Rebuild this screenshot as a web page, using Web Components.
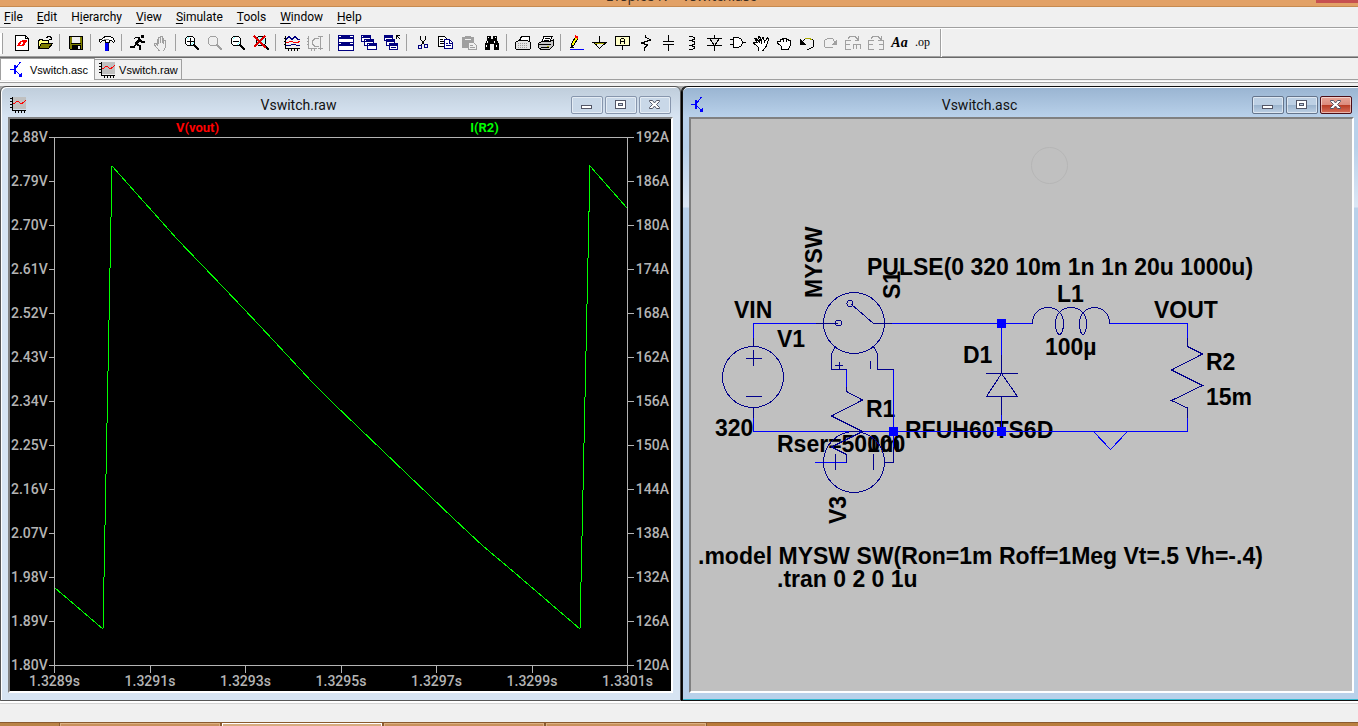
<!DOCTYPE html>
<html lang="en">
<head>
<meta charset="utf-8">
<title>LTspice IV - Vswitch.asc</title>
<style>
  html, body {
    height: 100%;
    margin: 0;
  }
  body {
    font-family: Roboto, "Liberation Sans", sans-serif;
    overflow: hidden;
  }
</style>
</head>
<body>
<lt-app></lt-app>

<script>
const ICONS = {
  'new': `<path d="M1.500.500h10l3 3v12h-13z" fill="#fff" stroke="#000"/><path d="M11.500.500v3h3" fill="none" stroke="#000"/><path d="M3 11l3-5h2l-2 4h2l3-5h2l-3 6zM8 5h5v2H7z" fill="red"/>`,
  'open': `<path d="M1 14V5h1V4h3v1h6v3" fill="#ffff80" stroke="#000"/><path d="M1.500 13.500l3-5h11l-4 5z" fill="#808000" stroke="#000"/><path d="M9 2.500h1v-1h3v1h1v2M12 4.500h3" fill="none" stroke="#000"/>`,
  'save': `<path d="M1.500 1.500h13v13h-12l-1-1z" fill="#808000" stroke="#000"/><path d="M4 2h8v6H4z" fill="#efefef"/><path d="M4 10h9v4H4z" fill="#000"/><path d="M10 11h2v3h-2z" fill="#efefef"/><path d="M3 8.500h10" stroke="#000"/>`,
  'hammer': `<path d="M6 7h4v9H6z" fill="#00f"/><path d="M9.500 7v9" stroke="#000080"/><path d="M.500 4.500h2l2-2 2-1h5l3 2 1 3-1 1-2-2h-2v2h-4v-2h-3l-2 2-1-1z" fill="#fff" stroke="#000"/><path d="M5 4.500h5" stroke="#909090"/>`,
  'run': `<path d="M11 0h3v3h-3z" fill="#000"/><path d="M4 3.500l2-1h3l1 1" fill="none" stroke="#000"/><path d="M10 4L6 9" stroke="#000" stroke-width="3"/><path d="M6 9.500l4 1v4M6 9l-2 3H0M10 5l2 2h3" fill="none" stroke="#000" stroke-width="1.500"/>`,
  'halt': `<path d="M4.500 10V4h1v5V2h2v6V1h2v7V3h1v6V5h2v7l-2 4h-4l-5-6v-2h1z" fill="#efefef" stroke="#a0a0a0"/>`,
  'zoomin': `<circle cx="6" cy="6" r="5" fill="#fff" stroke="#000"/><path d="M3 4l2-2M7 10l3-3" stroke="#7ff"/><path d="M3 6.500h7M6.500 3v7" stroke="#000"/><path d="M10 10l5 5" stroke="#000" stroke-width="2"/>`,
  'pan': `<circle cx="6" cy="6" r="5" fill="#efefef" stroke="#a0a0a0"/><path d="M10 10l5 5" stroke="#a0a0a0" stroke-width="2"/>`,
  'zoomout': `<circle cx="6" cy="6" r="5" fill="#fff" stroke="#000"/><path d="M3 4l2-2M7 10l3-3" stroke="#7ff"/><path d="M3 6.500h6" stroke="#000"/><path d="M10 10l5 5" stroke="#000" stroke-width="2"/>`,
  'zoomfit': `<circle cx="8" cy="6" r="5" fill="#bff" stroke="#000"/><path d="M11 10l5 5" stroke="#000" stroke-width="2"/><path d="M1 1l12 12M12 1L1 12" stroke="#e00000" stroke-width="1.500"/>`,
  'plot': `<path d="M1.500 1v13M1 13.500h15M0 3.500h2M0 6.500h2M0 9.500h2M4.500 13v3M7.500 13v3M10.500 13v3M13.500 13v3" stroke="#000"/><path d="M2 4.500l3-3 3 3 3-3 3 3h2" fill="none" stroke="#000080"/><path d="M2 7.500h2l2-1h2l2 1h3l3-1" fill="none" stroke="red"/><path d="M2 10.500h4l2-1h3l2 1h3" fill="none" stroke="#000080"/>`,
  'autorange': `<path d="M1.500 1v13M1 13.500h9M0 3.500h2M0 6.500h2M0 9.500h2M4.500 13v3M7.500 13v3M13.500 1v14M11 1.500h5M11 13.500h5" fill="none" stroke="#a0a0a0"/><path d="M12 3.500H8l-3 3v2l3 3h4" fill="none" stroke="#a0a0a0"/>`,
  'tile': `<path d="M.500.500h15v15H.500z" fill="#fff" stroke="#000080"/><path d="M0 0h16v4H0zM0 7h16v4H0z" fill="#000080"/><path d="M1 1.500h2M12 1.500h3M1 8.500h2M12 8.500h3" stroke="#fff"/>`,
  'cascade': `<g fill="#fff" stroke="#000080"><path d="M.500.500h9v6h-9zM3.500 4.500h9v6h-9zM6.500 8.500h9v6h-9z"/></g><path d="M0 0h10v3H0zM3 4h10v3H3zM6 8h10v3H6z" fill="#000080"/><path d="M1 1.500h1M4 5.500h1M7 9.500h1" stroke="#fff"/>`,
  'closeall': `<g fill="#fff" stroke="#000080"><path d="M.500.500h8v5h-8zM2.500 4.500h8v6h-8zM5.500 8.500h8v6h-8z"/></g><path d="M0 0h9v3H0zM2 4h9v3H2zM5 8h9v3H5z" fill="#000080"/><path d="M7 12.500h5" stroke="#000080"/><path d="M12.500 4V.500H16M12 0l4 4" fill="none" stroke="#000"/>`,
  'cut': `<path d="M5.500 1v3l4 6M10.500 1v3l-4 6" fill="none" stroke="#000"/><circle cx="5" cy="12" r="2" fill="none" stroke="#000080"/><circle cx="11" cy="11" r="2" fill="none" stroke="#000080"/>`,
  'copy': `<path d="M.500 1.500h6l3 3v7h-9z" fill="#fff" stroke="#000"/><path d="M2 4.500h3M2 6.500h5M2 8.500h5" stroke="#000"/><path d="M6.500 4.500h5l3 3v6h-8z" fill="#fff" stroke="#000080"/><path d="M11.500 5v3h3M8 8.500h2M8 10.500h5" fill="none" stroke="#000080"/>`,
  'paste': `<path d="M1 2h3V1h6v1h3v5H7v6H1z" fill="#a0a0a0"/><path d="M4 4h6" stroke="#efefef"/><path d="M7.500 7.500h5l3 3v4h-8z" fill="#efefef" stroke="#a0a0a0"/><path d="M9 10.500h3M9 12.500h5" stroke="#a0a0a0"/>`,
  'find': `<path d="M3 1h4v3h2V1h4v4l2 4v6h-5V9H6v6H1V9l2-4z" fill="#000"/><path d="M4.500 2v1M11.500 2v1M3.500 6v2M10.500 6v2M2.500 10v2M12.500 10v2" stroke="#fff"/>`,
  'preview': `<path d="M4.500 5.500l2-4h8v5" fill="#fff" stroke="#000"/><path d="M.500 7.500l3-2h9l3 2v6l-1 1H2l-1.500-1z" fill="#e4e4e4" stroke="#000"/><path d="M3 8.500h10M3 10.500h10M3 12.500h10" stroke="#a0a0a0" stroke-dasharray="1"/>`,
  'print': `<path d="M4 6.500l2-5h8l-2 5" fill="#fff" stroke="#000"/><path d="M7 3.500h5M6 5.500h5" stroke="#000"/><path d="M.500 8.500l3-2h9l3-2v6l-4 4H3l-2.500-2z" fill="#c8c8c8" stroke="#000"/><path d="M1 9.500h12M3 12.500h8" stroke="#000"/><path d="M9 11.500h2" stroke="#aa0"/>`,
  'wire': `<path d="M1 14.500h14" stroke="#00f"/><path d="M2 12l1-4 4-7 2 2-4 7z" fill="#ff0" stroke="#000"/><path d="M6 1l3 2" stroke="red" stroke-width="2"/><path d="M2 9v4h3z" fill="#000"/>`,
  'ground': `<path d="M7.500 1v6" stroke="#000"/><path d="M2 7.500h12l-6.500 6z" fill="#efefef" stroke="#000"/><path d="M0 7.500h15" stroke="#000"/><path d="M3 8.500h9" stroke="#aa0"/>`,
  'label': `<rect x=".500" y="1.500" width="14" height="9" rx="1" fill="#ffffc8" stroke="#000"/><path d="M7.500 11v4" stroke="#000"/><path d="M5.500 9V5l1-2h2l1 2v4M5 6.500h5" fill="none" stroke="#000"/>`,
  'resistor': `<path d="M7.500 0v2l5 3-9 3 6 2-3 3v3" fill="none" stroke="#000"/>`,
  'capacitor': `<path d="M7.500 0v6M7.500 10v6" stroke="#000"/><path d="M2 6.500h11M2 9.500h11" stroke="#000"/>`,
  'inductor': `<path d="M5 1.500h3l2 1v2l-3 1 3 1v3l-3 1 3 1v2l-2 1H5" fill="none" stroke="#000"/>`,
  'diode': `<path d="M7.500 0v16M0 10.500h15M0 3.500h15" stroke="#000"/><path d="M2.500 3.500h10l-5 7z" fill="#e4e4e4" stroke="#000"/>`,
  'gate': `<path d="M0 4.500h4M0 9.500h4M13 7.500h3" stroke="#000"/><path d="M3.500 2.500h5l3 2 1 3-1 3-3 2h-5z" fill="#fff" stroke="#000"/>`,
  'move': `<path d="M5 12L.500 8V7h3l1 1-3-5h1l4 4-1-6h1l2 6 1-5h1l1 5 3-4 1 1-2 7-4 5H6z" fill="#fff" stroke="#000"/>`,
  'drag': `<path d="M5 14v-3L1.500 8V6h3V4h2l1-1h2l1 1h2v1h2v5l-2 4z" fill="#fff" stroke="#000"/><path d="M7.500 4v3M10.500 4v3" stroke="#000"/>`,
  'undo': `<path d="M3 7l3-3 4-1 4 2 1 3-1 4-4 2H8" fill="none" stroke="#000"/><path d="M6 3.500h4l3 1" fill="none" stroke="#aa0"/><path d="M1 4v6h6z" fill="#000"/>`,
  'redo': `<path d="M13 8l-2-4-4-1-4 2-1 3 1 4 4 1 4-1" fill="none" stroke="#a0a0a0"/><path d="M15 4v6H9z" fill="#a0a0a0"/>`,
  'rotate': `<path d="M5.500 5.500h-5v9h5M1 9.500h4M8.500 14V9.500h7V14M11.500 10v4M3 3.500l2-2h5l3 3M13.500 1v4h-4" fill="none" stroke="#a0a0a0"/>`,
  'mirror': `<path d="M5.500 5.500h-5v9h5M1 9.500h4M10.500 5.500h5v9h-5M11 9.500h4M3 3.500l2-2h5l3 3M13.500 1v4h-4" fill="none" stroke="#a0a0a0"/>`,
  'schematic': `<path d="M0 7.500h4" stroke="#00f"/><path d="M4 3h2v9H4zM9 15h3v-4l-2 1z" fill="#00f"/><path d="M6 6l4.500-6M6 9l4 4" stroke="#00f"/>`,
  'waveform': `<path d="M3 0h13v12H3z" fill="#c0c0c0"/><path d="M2.500 0v14M2 13.500h14M0 1.500h2M0 4.500h2M0 7.500h2M0 10.500h2M5.500 13v3M8.500 13v3M11.500 13v3M14.500 13v3" stroke="#000"/><path d="M3 7h2V6h1V5h3v1h1v1h3V6h1V5h1V4h1V3h-1v1h-1v1h-2v1h-2V5h-1V4H6v1H5v1H3z" fill="red"/>`
};

class LtIcon extends HTMLElement {
  connectedCallback() {
    const shadow = this.shadowRoot || this.attachShadow({ mode: 'open' });
    shadow.innerHTML = `
      <style>
        :host { display: block; width: 16px; height: 16px; flex: none; }
        svg { display: block; }
      </style>
      <svg width="16" height="16" viewBox="0 0 16 16" shape-rendering="crispEdges" aria-hidden="true">${ICONS[this.getAttribute('name')] || ''}</svg>
    `;
  }
}
customElements.define('lt-icon', LtIcon);

class TitleBar extends HTMLElement {
  constructor() {
    super();
    this.attachShadow({ mode: 'open' }).innerHTML = `
      <style>
        :host {
          display: flex;
          justify-content: flex-end;
          height: 6px;
          overflow: hidden;
          background: #e2a166;
          border-bottom: 1px solid #c68a50;
        }
        h1 {
          flex: 1;
          margin: -14px 0 0 46px;
          font: 14px/20px "Open Sans", sans-serif;
          color: #3a2c20;
          text-align: center;
        }
        button {
          width: 42px;
          height: 3px;
          padding: 0;
          border: 0;
          background: #c75050;
        }
      </style>
      <h1><slot></slot></h1>
      <button type="button" aria-label="Close"></button>
    `;
  }
}
customElements.define('title-bar', TitleBar);

class MenuBar extends HTMLElement {
  constructor() {
    super();
    const items = ['File', 'Edit', 'H|ierarchy', 'View', 'Simulate', 'Tools', 'Window', 'Help'];
    // "|" puts the access key after the first letter
    const label = t => t.includes('|')
      ? t.replace(/^(.)\|(.)/, '$1<u>$2</u>')
      : `<u>${t[0]}</u>${t.slice(1)}`;
    this.attachShadow({ mode: 'open' }).innerHTML = `
      <style>
        :host { display: block; background: #f0f0f0; border-bottom: 1px solid #a0a0a0; }
        nav { display: flex; gap: 14px; height: 20px; padding-left: 4px; }
        button {
          padding: 0;
          border: 0;
          background: none;
          font: 12px/20px Roboto, sans-serif;
          color: #000;
        }
        u { text-underline-offset: 2px; }
      </style>
      <nav>${items.map(t => `<button type="button">${label(t)}</button>`).join('')}</nav>
    `;
  }
}
customElements.define('menu-bar', MenuBar);

class ToolBar extends HTMLElement {
  constructor() {
    super();
    const groups = [
      ['new', 'open'], ['save'], ['hammer'], ['run', 'halt'],
      ['zoomin', 'pan', 'zoomout', 'zoomfit'], ['plot', 'autorange'],
      ['tile', 'cascade', 'closeall'], ['cut', 'copy', 'paste', 'find'],
      ['preview', 'print'],
      ['wire', 'ground', 'label', 'resistor', 'capacitor', 'inductor', 'diode', 'gate',
        'move', 'drag', 'undo', 'redo', 'rotate', 'mirror']
    ];
    const html = groups.map(g => `<div class="group">${g.map(n =>
      `<button type="button" aria-label="${n}"><lt-icon name="${n}"></lt-icon></button>`).join('')}</div>`);
    this.attachShadow({ mode: 'open' }).innerHTML = `
      <style>
        :host {
          display: flex;
          height: 28px;
          background: #f0f0f0;
          border-top: 1px solid #fff;
          border-bottom: 1px solid #696969;
          box-shadow: inset 0 -1px #a0a0a0;
        }
        .grip { width: 2px; margin: 4px 8px 3px 0; background: #fff; border-right: 1px solid #a0a0a0; }
        .group { display: flex; }
        .group + .group::before {
          content: "";
          width: 1px;
          height: 17px;
          margin: 5px 5px 0 2px;
          background: #a0a0a0;
        }
        button {
          width: 23px;
          height: 27px;
          padding: 0 4px 0 3px;
          border: 0;
          background: none;
          color: #000;
        }
        .text { padding: 0; line-height: 27px; font-family: "Liberation Serif", serif; }
        .anno { font-size: 14px; font-weight: bold; font-style: italic; }
        .op { font-size: 12px; }
        .end { width: 1px; margin-left: 6px; background: #a0a0a0; border-right: 1px solid #fff; }
      </style>
      <div class="grip"></div>
      ${html.join('')}
      <button type="button" class="text anno">Aa</button>
      <button type="button" class="text op">.op</button>
      <div class="end"></div>
    `;
  }
}
customElements.define('tool-bar', ToolBar);

class DocTabs extends HTMLElement {
  constructor() {
    super();
    this.attachShadow({ mode: 'open' }).innerHTML = `
      <style>
        :host {
          display: block;
          background: #f0f0f0;
          border-bottom: 1px solid #a0a0a0;
          box-shadow: inset 0 -1px #fff;
        }
        .row { display: flex; align-items: flex-end; height: 21px; margin-bottom: 2px; border-bottom: 1px solid #a0a0a0; }
        button {
          display: flex;
          align-items: center;
          gap: 4px;
          box-sizing: border-box;
          height: 20px;
          padding: 0 3px 0 4px;
          border: 1px solid #a0a0a0;
          border-width: 1px 1px 0 0;
          background: #f0f0f0;
          font: 11px/18px "Liberation Sans", sans-serif;
          color: #000;
        }
        button[aria-selected="true"] {
          height: 22px;
          margin-bottom: -1px;
          padding: 0 6px 0 9px;
          border-left-width: 1px;
          background: #fff;
        }
      </style>
      <div class="row" role="tablist">
        <button type="button" role="tab" aria-selected="true"><lt-icon name="schematic"></lt-icon>Vswitch.asc</button>
        <button type="button" role="tab" aria-selected="false"><lt-icon name="waveform"></lt-icon>Vswitch.raw</button>
      </div>
    `;
  }
}
customElements.define('doc-tabs', DocTabs);

class MdiWindow extends HTMLElement {
  constructor() {
    super();
    this.attachShadow({ mode: 'open' }).innerHTML = `
      <style>
        :host {
          --frame: #d7e4f2;
          --title-from: #bfcddb;
          --edge: #555;
          --btn: #c9d8e8;
          --btn-low: #c9d8e8;
          --btn-edge: #8796ad;
          display: flex;
          flex-direction: column;
          box-sizing: border-box;
          min-width: 0;
          padding: 1px 7px 7px;
          border: 1px solid var(--edge);
          border-radius: 6px 6px 0 0;
          background: linear-gradient(var(--title-from), var(--frame) 30px, var(--frame));
          box-shadow: inset 1px 1px #fff;
        }
        :host([active]) {
          --frame: #b9d1ea;
          --title-from: #99b4d1;
          --edge: #111;
          --btn: #bdd0e4;
          --btn-low: #9ab3cd;
          --btn-edge: #65758c;
          padding: 1px 4px 7px 6px;
          border-right: 0;
          border-radius: 6px 0 0 0;
          background: linear-gradient(var(--title-from), var(--frame) 30px, var(--frame) 60px, #dbe7f5 120px, var(--frame) 121px);
          box-shadow: inset 0 1px #fff, inset 0 -1px #35b8d0, -1px 0 #000;
        }
        header { display: flex; align-items: center; height: 26px; padding: 0 2px 3px; }
        lt-icon { margin-top: 8px; }
        h2 { flex: 1; margin: 8px 0 0; font: 14px/20px Roboto, sans-serif; color: #111; text-align: center; }
        .buttons { display: flex; gap: 2px; margin-top: 7px; }
        button {
          display: grid;
          place-items: center;
          width: 32px;
          height: 18px;
          padding: 0;
          border: 1px solid var(--btn-edge);
          border-radius: 2px;
          background: linear-gradient(var(--btn) 50%, var(--btn-low) 50%, var(--btn));
          box-shadow: inset 0 0 0 1px rgba(255, 255, 255, .5);
        }
        :host([active]) .close { border-color: #4c0d16; background: linear-gradient(#e8a598, #dc8a7c 50%, #b83a22 50%, #d4705c); }
        svg { display: block; }
        .client {
          flex: 1;
          min-height: 0;
          border: 2px solid;
          border-color: #808080 #fff #fff #808080;
          overflow: hidden;
        }
      </style>
      <header>
        <lt-icon></lt-icon>
        <h2></h2>
        <div class="buttons">
          <button type="button" aria-label="Minimize"><svg width="12" height="12" shape-rendering="crispEdges"><path d="M.500 6.500h10v3h-10z" fill="#fff" stroke="#535666"/></svg></button>
          <button type="button" aria-label="Maximize"><svg width="12" height="12" shape-rendering="crispEdges"><path d="M.500 1.500h10v8h-10zM3.500 4.500h4v2h-4z" fill="#fff" fill-rule="evenodd" stroke="#535666"/></svg></button>
          <button type="button" class="close" aria-label="Close"><svg width="12" height="12"><path d="M.500 1.500h3L5.500 4l2-2.500h3v1L7.500 5.500l3 3v1h-3l-2-2.500-2 2.500h-3v-1l3-3-3-3z" fill="#fff" stroke="#535666"/></svg></button>
        </div>
      </header>
      <div class="client"><slot></slot></div>
    `;
  }

  connectedCallback() {
    const shadow = this.shadowRoot;
    shadow.querySelector('h2').textContent = this.getAttribute('heading');
    const icon = shadow.querySelector('lt-icon');
    icon.setAttribute('name', this.getAttribute('icon'));
    icon.connectedCallback();
  }
}
customElements.define('mdi-window', MdiWindow);

class WavePlot extends HTMLElement {
  constructor() {
    super();
    const volts = ['2.88V', '2.79V', '2.70V', '2.61V', '2.52V', '2.43V', '2.34V', '2.25V', '2.16V', '2.07V', '1.98V', '1.89V', '1.80V'];
    const amps = ['192A', '186A', '180A', '174A', '168A', '162A', '156A', '150A', '144A', '138A', '132A', '126A', '120A'];
    const times = ['1.3289s', '1.3291s', '1.3293s', '1.3295s', '1.3297s', '1.3299s', '1.3301s'];
    const list = a => a.map(t => `<li>${t}</li>`).join('');
    this.attachShadow({ mode: 'open' }).innerHTML = `
      <style>
        :host {
          display: grid;
          grid-template: 18px 1fr 25px / 44px 1fr 43px;
          height: 100%;
          background: #000;
          color: #b4b4b4;
          font: 500 14px/16px Roboto, sans-serif;
        }
        .legend { grid-column: 2; display: flex; font-size: 13px; font-weight: bold; line-height: 18px; }
        .legend span { flex: 1; text-align: center; }
        .v { color: #f00; }
        .i { color: #0f0; }
        ul { display: flex; justify-content: space-between; margin: 0; padding: 0; list-style: none; }
        .y { flex-direction: column; }
        .y li { display: flex; align-items: center; height: 1px; line-height: 1px; }
        .y li::before, .y li::after { content: ""; height: 1px; }
        .left { grid-area: 2 / 1; }
        .left li { justify-content: flex-end; gap: 1px; }
        .left li::after { width: 8px; background: currentColor; }
        .right { grid-area: 2 / 3; }
        .right li { gap: 2px; }
        .right li::before { width: 8px; background: currentColor; }
        .x { grid-area: 3 / 2; }
        .x li { display: flex; flex-direction: column; align-items: center; width: 1px; }
        .x li::before { content: ""; flex: none; width: 1px; height: 7px; background: currentColor; }
        .area { grid-area: 2 / 2; box-sizing: border-box; min-height: 0; border: 1px solid; }
        svg { display: block; width: 100%; height: 100%; }
      </style>
      <div class="legend"><span class="v">V(vout)</span><span class="i">I(R2)</span></div>
      <ul class="y left">${list(volts)}</ul>
      <div class="area">
        <svg viewBox="0 0 572 527" preserveAspectRatio="none" shape-rendering="crispEdges">
          <polyline fill="none" stroke="#0f0" vector-effect="non-scaling-stroke"
            points="0,450 48,491 57,28 122,101 170,151 205,188 258,245 278,265 328,313 375,358 399,381 428,408 460,435 525,491 535,28 572,70"/>
        </svg>
      </div>
      <ul class="y right">${list(amps)}</ul>
      <ul class="x">${list(times)}</ul>
    `;
  }
}
customElements.define('wave-plot', WavePlot);

class SchematicSheet extends HTMLElement {
  constructor() {
    super();
    this.attachShadow({ mode: 'open' }).innerHTML = `
      <style>
        :host { display: block; height: 100%; background: #c0c0c0; }
        svg { display: block; width: 100%; height: 100%; }
        text { font: bold 23px "Liberation Sans", sans-serif; fill: #000; }
        .wire, .part { fill: none; shape-rendering: crispEdges; }
        .wire { stroke: #00f; }
        .part { stroke: #00008b; }
      </style>
      <svg viewBox="0 0 661 572" role="img" aria-label="Switch mode converter schematic">
        <circle cx="358.500" cy="46.500" r="18" fill="none" stroke="#b6b6b6"/>

        <g>
          <text x="43" y="199">VIN</text>
          <text x="86" y="228">V1</text>
          <text x="24" y="317">320</text>
          <text x="86" y="333">Rser=500m</text>
          <text x="176" y="333">100</text>
          <text x="175" y="298">R1</text>
          <text x="176" y="156">PULSE(0 320 10m 1n 1n 20u 1000u)</text>
          <text x="366" y="183">L1</text>
          <text x="354" y="236">100µ</text>
          <text x="463" y="199">VOUT</text>
          <text x="272" y="244">D1</text>
          <text x="214" y="319">RFUH60TS6D</text>
          <text x="515" y="251">R2</text>
          <text x="515" y="286">15m</text>
          <text transform="translate(131 179) rotate(-90)">MYSW</text>
          <text transform="translate(209 180) rotate(-90)">S1</text>
          <text transform="translate(155 405) rotate(-90)">V3</text>
          <text x="7" y="445">.model MYSW SW(Ron=1m Roff=1Meg Vt=.5 Vh=-.4)</text>
          <text x="86" y="468">.tran 0 2 0 1u</text>
        </g>

        <path class="wire" d="M125 204.500H62.500V219M62.500 299V312.500H496.500V299M201 204.500H341.500M418.500 204.500H496.500V219M155.500 250.500V268M202.500 250.500V343.500M124 343.500H155.500M310.500 204V236M310.500 296V312M402.500 312.500L419.500 330.500 436.500 312.500"/>

        <!-- V1 -->
        <circle class="part" cx="62" cy="258" r="30.500"/>
        <path class="part" d="M62.500 219V227M62.500 288V299M55 239.500H71M62.500 231V247M55 277.500H71"/>
        <!-- S1 -->
        <circle class="part" cx="163" cy="204" r="30.500"/>
        <circle class="part" cx="147.500" cy="204" r="3"/>
        <circle class="part" cx="159" cy="184.500" r="3"/>
        <path class="part" d="M125 204.500H147M160 185L182.500 204.500H201M144.500 227.500L140.500 235V250.500H155.500M182.500 227.500L186.500 235V250.500H202.500M144 246.500H152M148.500 243V251M179.500 242V250"/>
        <!-- R1 -->
        <path class="part" d="M155.500 268V272.500L171.500 281 140.500 297 171.500 312.500 140.500 328 155.500 335.500V343.500"/>
        <!-- V3 -->
        <circle class="part" cx="163" cy="343" r="30.500"/>
        <path class="part" d="M144.500 335V351M182.500 335V351M194 343.500H202.500V328"/>
        <!-- D1 -->
        <path class="part" d="M310.500 236V254M310.500 277V296M295 254.500H327M310.500 254.500L295.500 277.500H326.500z"/>
        <!-- L1 -->
        <path class="part" d="M341.500 204.500C341.500 195 348 188.500 357 188.500S372.500 195 372.500 204.500C372.500 210 371 215.500 368.500 215.500S364.500 210 364.500 204.500C364.500 195 371 188.500 380 188.500S395.500 195 395.500 204.500C395.500 210 394 215.500 392 215.500S388.500 210 388.500 204.500C388.500 195 395 188.500 403.500 188.500S418.500 195 418.500 204.500"/>
        <!-- R2 -->
        <path class="part" d="M496.500 219V227.500L511.500 235 480.500 251 511.500 266.500 480.500 281.500 496.500 289V299"/>

        <path fill="#00f" d="M306 200h9v9h-9zM198 308h9v9h-9zM306 308h9v9h-9z"/>
      </svg>
    `;
  }
}
customElements.define('schematic-sheet', SchematicSheet);

class TaskBar extends HTMLElement {
  constructor() {
    super();
    this.attachShadow({ mode: 'open' }).innerHTML = `
      <style>
        :host {
          display: flex;
          gap: 2px;
          height: 3px;
          padding-left: 60px;
          overflow: hidden;
          border-top: 1px solid #8a5a30;
          background: linear-gradient(90deg, #b98347, #b87838 50%, #b98040);
        }
        button {
          box-sizing: border-box;
          width: 160px;
          height: 20px;
          padding: 0;
          border: 1px solid #dcb282;
          outline: 1px solid #8a5a30;
          background: #c8905c;
        }
        .current { border-color: #fff; background: #d8ab80; }
      </style>
      <button type="button" aria-label="Task 1"></button>
      <button type="button" aria-label="LTspice IV" class="current"></button>
      <button type="button" aria-label="Task 3"></button>
      <button type="button" aria-label="Task 4"></button>
    `;
  }
}
customElements.define('task-bar', TaskBar);

class LtApp extends HTMLElement {
  constructor() {
    super();
    this.attachShadow({ mode: 'open' }).innerHTML = `
      <style>
        :host { display: flex; flex-direction: column; height: 100vh; background: #f0f0f0; }
        .workspace {
          flex: 1;
          display: grid;
          grid-template: minmax(0, 1fr) / 681fr 676fr;
          gap: 1px;
          min-height: 0;
          margin-top: 3px;
          background: #a8a8a8;
        }
        footer { height: 18px; border-top: 1px solid #d4d4d4; box-shadow: 0 -2px #fff; margin-top: 2px; }
      </style>
      <title-bar>LTspice IV - Vswitch.asc</title-bar>
      <menu-bar></menu-bar>
      <tool-bar></tool-bar>
      <doc-tabs></doc-tabs>
      <main class="workspace">
        <mdi-window heading="Vswitch.raw" icon="waveform"><wave-plot></wave-plot></mdi-window>
        <mdi-window heading="Vswitch.asc" icon="schematic" active><schematic-sheet></schematic-sheet></mdi-window>
      </main>
      <footer></footer>
      <task-bar></task-bar>
    `;
  }
}
customElements.define('lt-app', LtApp);
</script>
</body>
</html>
